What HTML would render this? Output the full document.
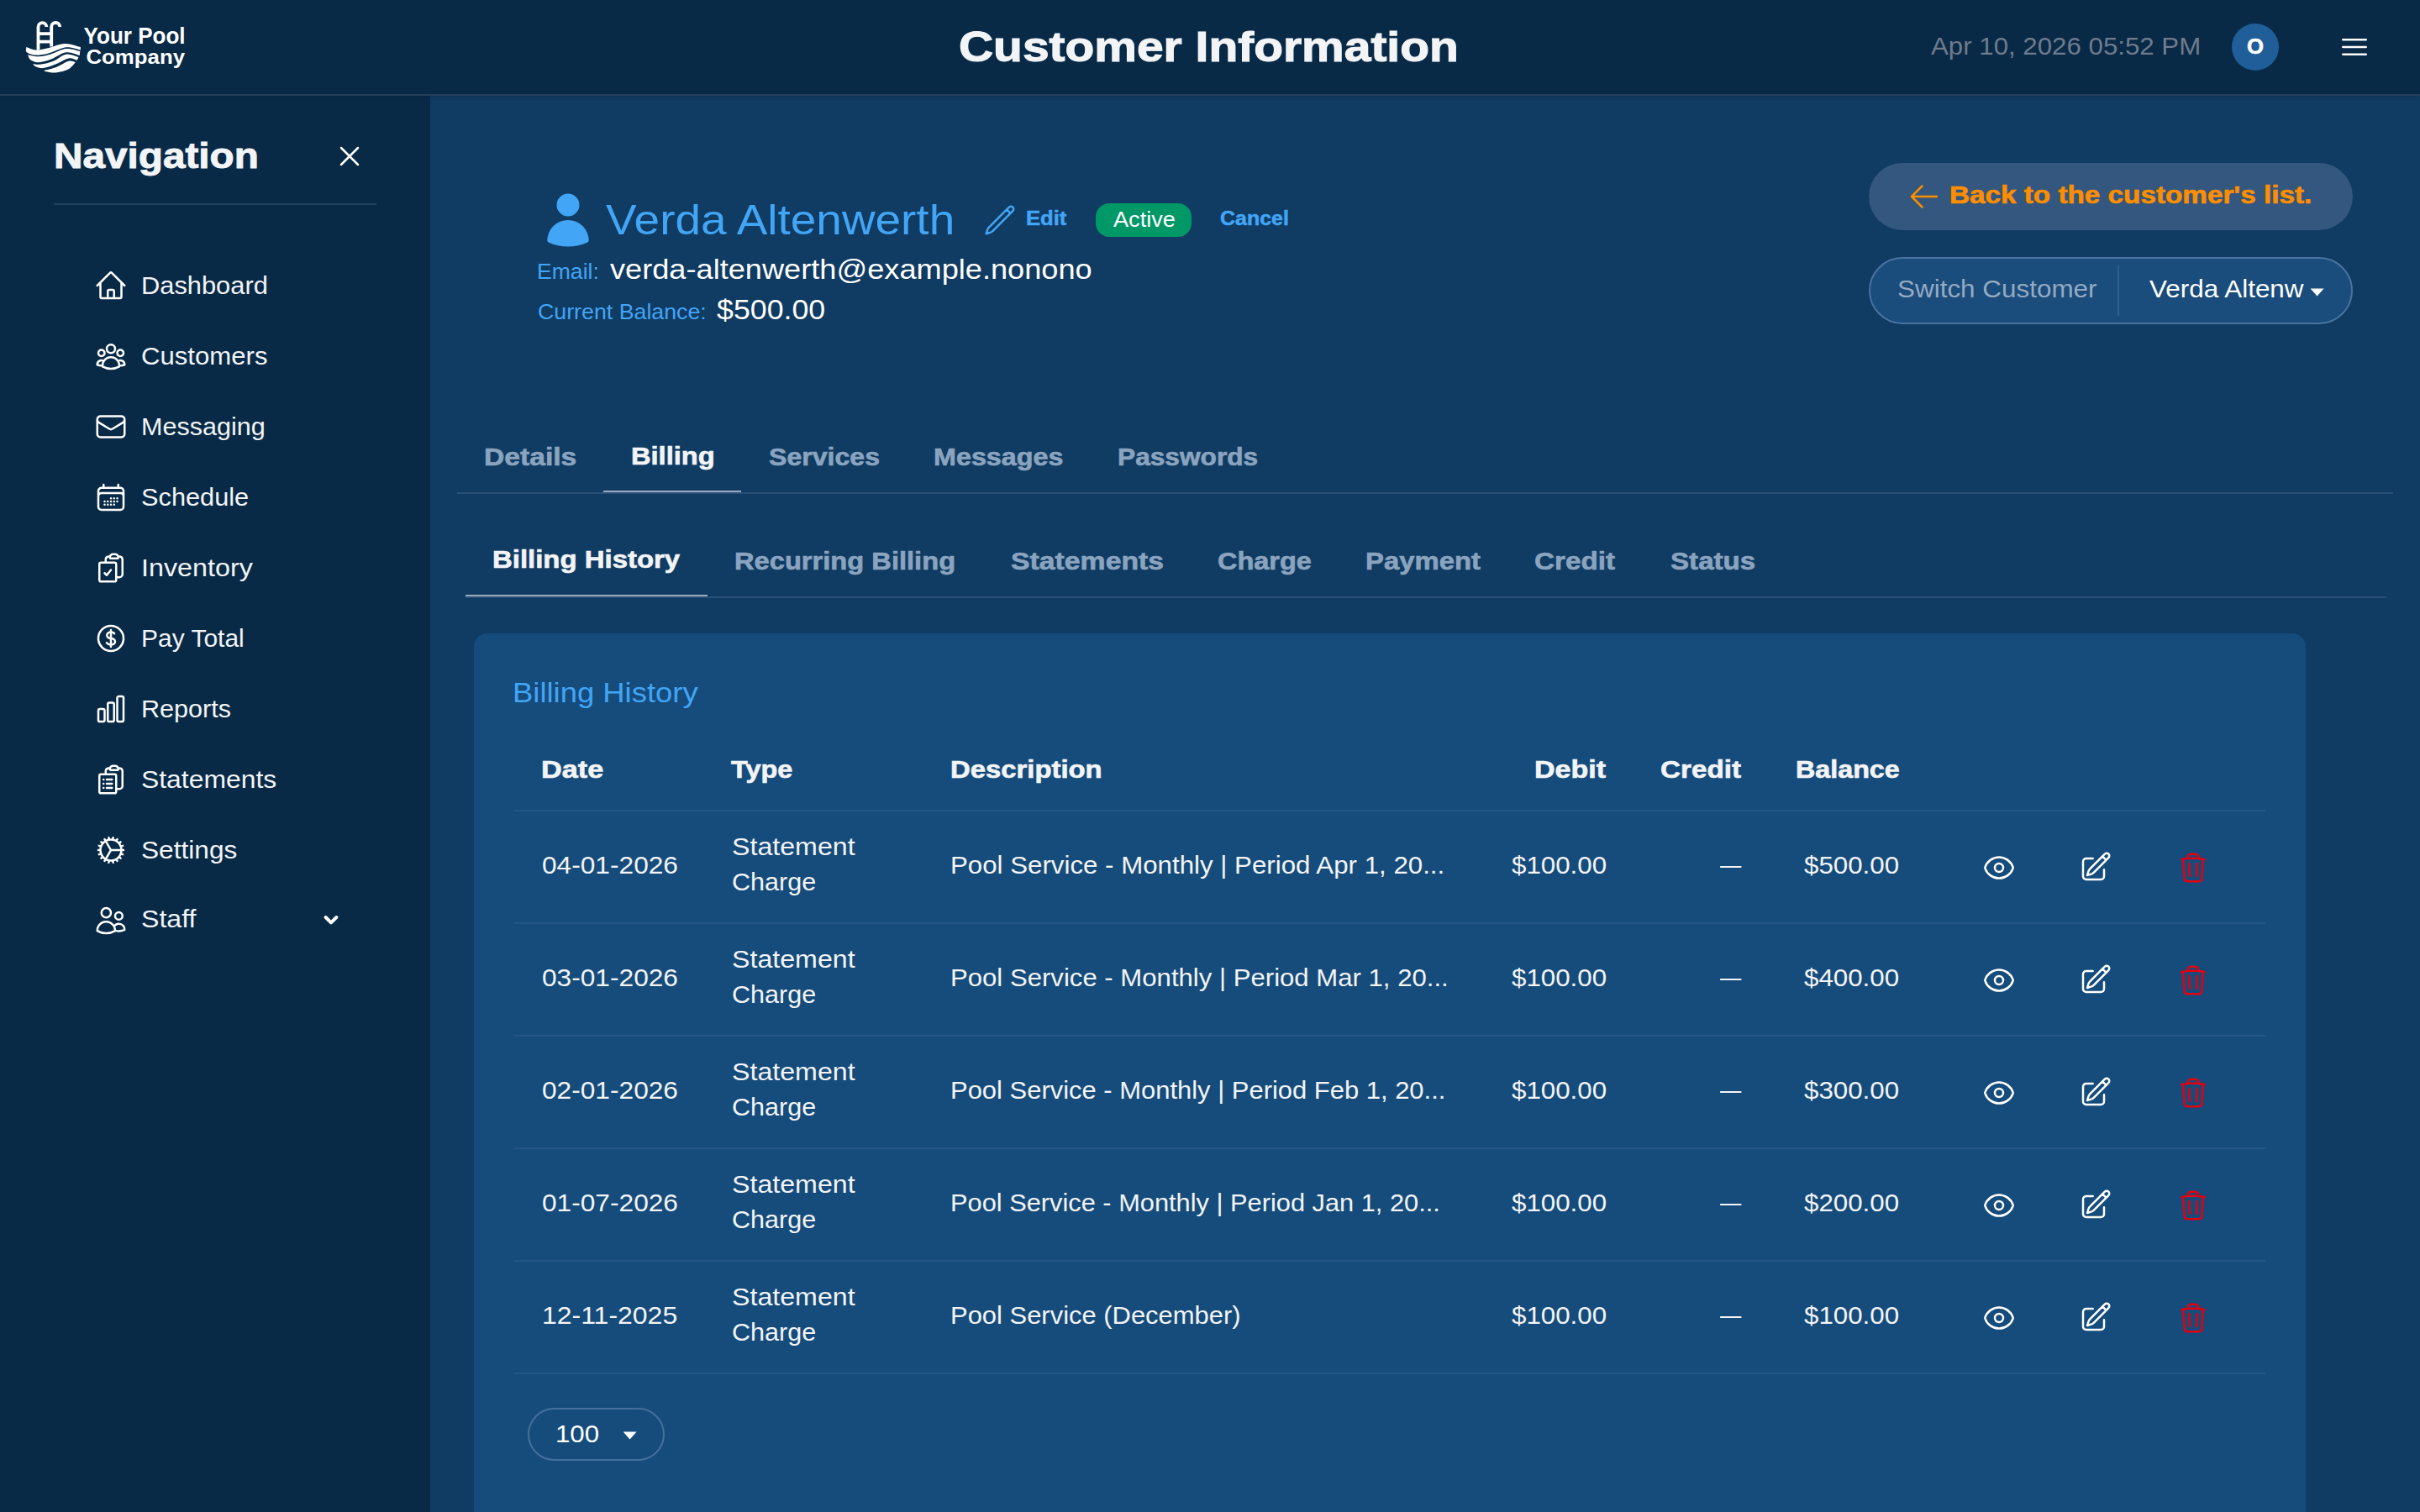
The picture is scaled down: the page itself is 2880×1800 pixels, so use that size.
<!DOCTYPE html>
<html><head><meta charset="utf-8"><title>Customer Information</title>
<style>
html,body{margin:0;padding:0;}
body{width:1440px;height:900px;overflow:hidden;position:relative;background:#103b62;font-family:"Liberation Sans",sans-serif;}
.t{position:absolute;white-space:nowrap;transform-origin:0 0;}
@media (min-width: 2000px) { body{zoom:2;} .k0{margin-top:-0.50px}.k1{margin-top:-0.50px}.k2{margin-top:-0.50px}.k3{margin-top:-1.50px}.k4{margin-top:-1.50px}.k5{margin-top:-1.00px}.k6{margin-top:-0.50px}.k7{margin-top:-1.00px}.k8{margin-top:-1.00px} }
svg{display:block}
</style></head><body>
<div style="position:absolute;left:0px;top:57px;width:256px;height:843px;background:#082a47;"></div>
<div style="position:absolute;left:0px;top:0px;width:1440px;height:56px;background:#082a47;box-shadow:0 1px 3px rgba(0,0,0,0.18)"></div>
<div style="position:absolute;left:0px;top:56px;width:1440px;height:1px;background:#243f5a;"></div>
<svg style="position:absolute;left:0;top:0" width="120" height="50" viewBox="0 0 240 100">
<g fill="none" stroke="#fff" stroke-width="3.8">
<path d="M45.5,59.5 V32 A4.95,4.95 0 0 1 55.4,32"/>
<path d="M61.2,55.5 V32 A5,5 0 0 1 71.2,32"/>
<path d="M47,40.1 H60 M47,49.7 H60"/>
</g>
<g fill="#fff">
<path d="M31.3,56 C33.23,56.60 38.48,59.45 42.90,59.60 C47.32,59.75 52.10,58.18 57.80,56.90 C63.50,55.62 70.75,52.05 77.10,51.90 C83.45,51.75 92.77,55.32 95.90,56.00 L95.9,59.6 C93.02,59.05 84.95,55.65 78.60,56.30 C72.25,56.95 63.75,61.95 57.80,63.50 C51.85,65.05 47.22,65.80 42.90,65.60 C38.58,65.40 33.83,63.90 31.90,62.30 C29.97,60.70 31.40,57.05 31.30,56.00 Z"/>
<path d="M33.1,65.3 C35.23,65.63 41.30,67.45 45.90,67.30 C50.50,67.15 55.25,65.93 60.70,64.40 C66.15,62.87 72.83,58.65 78.60,58.10 C84.37,57.55 92.52,60.60 95.30,61.10 L94.7,65.9 C92.02,65.30 84.27,61.52 78.60,62.30 C72.93,63.08 66.15,68.62 60.70,70.60 C55.25,72.58 49.97,74.10 45.90,74.20 C41.83,74.30 38.43,72.68 36.30,71.20 C34.17,69.72 33.63,66.28 33.10,65.30 Z"/>
<path d="M39,76.3 C40.63,76.35 44.68,77.20 48.80,76.60 C52.92,76.00 58.73,74.68 63.70,72.70 C68.67,70.72 73.63,65.45 78.60,64.70 C83.57,63.95 91.02,67.62 93.50,68.20 L91.7,71.8 C90.02,71.40 85.77,68.65 81.60,69.40 C77.43,70.15 71.67,74.37 66.70,76.30 C61.73,78.23 55.77,80.47 51.80,81.00 C47.83,81.53 45.03,80.28 42.90,79.50 C40.77,78.72 39.65,76.83 39.00,76.30 Z"/>
<path d="M52.4,84 C54.78,83.35 61.83,81.98 66.70,80.10 C71.57,78.22 77.73,73.73 81.60,72.70 C85.47,71.67 88.52,73.70 89.90,73.90 L89.9,73.9 C88.52,75.28 85.47,80.12 81.60,82.20 C77.73,84.28 71.17,85.90 66.70,86.40 C62.23,86.90 57.18,85.60 54.80,85.20 C52.42,84.80 52.80,84.20 52.40,84.00 Z"/>
</g>
<text x="99.6" y="52.2" font-family="Liberation Sans" font-weight="700" font-size="28" fill="#fff" textLength="121" lengthAdjust="spacingAndGlyphs">Your Pool</text>
<text x="102.5" y="76.4" font-family="Liberation Sans" font-weight="700" font-size="24.5" fill="#fff" textLength="117.5" lengthAdjust="spacingAndGlyphs">Company</text>
</svg>
<div class="t k8" style="left:570.74px;top:16.25px;font-size:25.32px;line-height:25.32px;font-weight:700;transform:scaleX(1.1248);color:#f3f4f6;-webkit-text-stroke:0.56px #f3f4f6;">Customer Information</div>
<div class="t k3" style="left:1149.00px;top:21.30px;font-size:14.77px;line-height:14.77px;font-weight:400;transform:scaleX(1.0575);color:#6f7b8c;">Apr 10, 2026 05:52 PM</div>
<div style="position:absolute;left:1328px;top:14px;width:28px;height:28px;border-radius:50%;background:#1f5e99"></div>
<div class="t k2" style="left:1336.84px;top:22.10px;font-size:12.66px;line-height:12.66px;font-weight:700;transform:scaleX(1.0156);color:#fff;-webkit-text-stroke:0.28px #fff;">O</div>
<svg style="position:absolute;left:1391px;top:18px;" width="20" height="20" viewBox="0 0 24 24" fill="none" stroke="#fff" stroke-width="1.5" stroke-linecap="round" stroke-linejoin="round"><path d="M3.75 6.75h16.5M3.75 12h16.5m-16.5 5.25h16.5"/></svg>
<div class="t k6" style="left:32.18px;top:83.00px;font-size:21.1px;line-height:21.1px;font-weight:700;transform:scaleX(1.1306);color:#f3f4f6;-webkit-text-stroke:0.46px #f3f4f6;">Navigation</div>
<svg style="position:absolute;left:198px;top:83px;" width="20" height="20" viewBox="0 0 24 24" fill="none" stroke="#fff" stroke-width="1.5" stroke-linecap="round" stroke-linejoin="round"><path d="M6 18 18 6M6 6l12 12"/></svg>
<div style="position:absolute;left:32px;top:121px;width:192px;height:1px;background:#22405f;"></div>
<div class="t k3" style="left:84.13px;top:164.00px;font-size:14.77px;line-height:14.77px;font-weight:400;transform:scaleX(1.0437);color:#f3f4f6;">Dashboard</div>
<svg style="position:absolute;left:56px;top:159.9px;" width="20" height="20" viewBox="0 0 24 24" fill="none" stroke="#fff" stroke-width="1.5" stroke-linecap="round" stroke-linejoin="round"><path d="m2.25 12 8.954-8.955c.44-.439 1.152-.439 1.591 0L21.75 12M4.5 9.75v10.125c0 .621.504 1.125 1.125 1.125H9.75v-4.875c0-.621.504-1.125 1.125-1.125h2.25c.621 0 1.125.504 1.125 1.125V21h4.125c.621 0 1.125-.504 1.125-1.125V9.75M8.25 21h8.25"/></svg>
<div class="t k3" style="left:83.99px;top:206.00px;font-size:14.77px;line-height:14.77px;font-weight:400;transform:scaleX(1.0539);color:#f3f4f6;">Customers</div>
<svg style="position:absolute;left:56px;top:201.9px;" width="20" height="20" viewBox="0 0 24 24" fill="none" stroke="#fff" stroke-width="1.5" stroke-linecap="round" stroke-linejoin="round"><path d="M18 18.72a9.094 9.094 0 0 0 3.741-.479 3 3 0 0 0-4.682-2.72m.94 3.198.001.031c0 .225-.012.447-.037.666A11.944 11.944 0 0 1 12 21c-2.17 0-4.207-.576-5.963-1.584A6.062 6.062 0 0 1 6 18.719m12 0a5.971 5.971 0 0 0-.941-3.197m0 0A5.995 5.995 0 0 0 12 12.75a5.995 5.995 0 0 0-5.058 2.772m0 0a3 3 0 0 0-4.681 2.72 8.986 8.986 0 0 0 3.74.477m.94-3.197a5.971 5.971 0 0 0-.94 3.197M15 6.75a3 3 0 1 1-6 0 3 3 0 0 1 6 0Zm6 3a2.25 2.25 0 1 1-4.5 0 2.25 2.25 0 0 1 4.5 0Zm-13.5 0a2.25 2.25 0 1 1-4.5 0 2.25 2.25 0 0 1 4.5 0Z"/></svg>
<div class="t k3" style="left:84.14px;top:248.00px;font-size:14.77px;line-height:14.77px;font-weight:400;transform:scaleX(1.0348);color:#f3f4f6;">Messaging</div>
<svg style="position:absolute;left:56px;top:243.9px;" width="20" height="20" viewBox="0 0 24 24" fill="none" stroke="#fff" stroke-width="1.5" stroke-linecap="round" stroke-linejoin="round"><path d="M21.75 6.75v10.5a2.25 2.25 0 0 1-2.25 2.25h-15a2.25 2.25 0 0 1-2.25-2.25V6.75m19.5 0A2.25 2.25 0 0 0 19.5 4.5h-15a2.25 2.25 0 0 0-2.25 2.25m19.5 0v.243a2.25 2.25 0 0 1-1.07 1.916l-7.5 4.615a2.25 2.25 0 0 1-2.36 0L3.32 8.91a2.25 2.25 0 0 1-1.07-1.916V6.75"/></svg>
<div class="t k3" style="left:84.14px;top:290.00px;font-size:14.77px;line-height:14.77px;font-weight:400;transform:scaleX(1.0410);color:#f3f4f6;">Schedule</div>
<svg style="position:absolute;left:56px;top:285.9px;" width="20" height="20" viewBox="0 0 24 24" fill="none" stroke="#fff" stroke-width="1.5" stroke-linecap="round" stroke-linejoin="round"><path d="M6.75 3v2.25M17.25 3v2.25M3 18.75V7.5a2.25 2.25 0 0 1 2.25-2.25h13.5A2.25 2.25 0 0 1 21 7.5v11.25m-18 0A2.25 2.25 0 0 0 5.25 21h13.5A2.25 2.25 0 0 0 21 18.75m-18 0v-7.5A2.25 2.25 0 0 1 5.25 9h13.5A2.25 2.25 0 0 1 21 11.25v7.5m-9-6h.008v.008H12v-.008ZM12 15h.008v.008H12V15Zm0 2.25h.008v.008H12v-.008ZM9.75 15h.008v.008H9.75V15Zm0 2.25h.008v.008H9.75v-.008ZM7.5 15h.008v.008H7.5V15Zm0 2.25h.008v.008H7.5v-.008Zm6.75-4.5h.008v.008h-.008v-.008Zm0 2.25h.008v.008h-.008V15Zm0 2.25h.008v.008h-.008v-.008Zm2.25-4.5h.008v.008H16.5v-.008Zm0 2.25h.008v.008H16.5V15Z"/></svg>
<div class="t k3" style="left:83.91px;top:332.00px;font-size:14.77px;line-height:14.77px;font-weight:400;transform:scaleX(1.0941);color:#f3f4f6;">Inventory</div>
<svg style="position:absolute;left:56px;top:327.9px;" width="20" height="20" viewBox="0 0 24 24" fill="none" stroke="#fff" stroke-width="1.5" stroke-linecap="round" stroke-linejoin="round"><path d="M11.35 3.836c-.065.21-.1.433-.1.664 0 .414.336.75.75.75h4.5a.75.75 0 0 0 .75-.75 2.25 2.25 0 0 0-.1-.664m-5.8 0A2.251 2.251 0 0 1 13.5 2.25H15c1.012 0 1.867.668 2.15 1.586m-5.8 0c-.376.023-.75.05-1.124.08C9.095 4.01 8.25 4.973 8.25 6.108V8.25m8.9-4.414c.376.023.75.05 1.124.08 1.131.094 1.976 1.057 1.976 2.192V16.5A2.25 2.25 0 0 1 18 18.75h-2.25m-7.5-10.5H4.875c-.621 0-1.125.504-1.125 1.125v11.25c0 .621.504 1.125 1.125 1.125h9.75c.621 0 1.125-.504 1.125-1.125V18.75m-7.5-10.5h6.375c.621 0 1.125.504 1.125 1.125v9.375m-8.25-3 1.5 1.5 3-3.75"/></svg>
<div class="t k3" style="left:84.17px;top:374.00px;font-size:14.77px;line-height:14.77px;font-weight:400;transform:scaleX(1.0151);color:#f3f4f6;">Pay Total</div>
<svg style="position:absolute;left:56px;top:369.9px;" width="20" height="20" viewBox="0 0 24 24" fill="none" stroke="#fff" stroke-width="1.5" stroke-linecap="round" stroke-linejoin="round"><path d="M12 6v12m-3-2.818.879.659c1.171.879 3.07.879 4.242 0 1.172-.879 1.172-2.303 0-3.182C13.536 12.219 12.768 12 12 12c-.725 0-1.45-.22-2.003-.659-1.106-.879-1.106-2.303 0-3.182s2.9-.879 4.006 0l.415.33M21 12a9 9 0 1 1-18 0 9 9 0 0 1 18 0Z"/></svg>
<div class="t k3" style="left:84.14px;top:416.00px;font-size:14.77px;line-height:14.77px;font-weight:400;transform:scaleX(1.0348);color:#f3f4f6;">Reports</div>
<svg style="position:absolute;left:56px;top:411.9px;" width="20" height="20" viewBox="0 0 24 24" fill="none" stroke="#fff" stroke-width="1.5" stroke-linecap="round" stroke-linejoin="round"><path d="M3 13.125C3 12.504 3.504 12 4.125 12h2.25c.621 0 1.125.504 1.125 1.125v6.75C7.5 20.496 6.996 21 6.375 21h-2.25A1.125 1.125 0 0 1 3 19.875v-6.75ZM9.75 8.625c0-.621.504-1.125 1.125-1.125h2.25c.621 0 1.125.504 1.125 1.125v11.25c0 .621-.504 1.125-1.125 1.125h-2.25a1.125 1.125 0 0 1-1.125-1.125V8.625ZM16.5 4.125c0-.621.504-1.125 1.125-1.125h2.25C20.496 3 21 3.504 21 4.125v15.75c0 .621-.504 1.125-1.125 1.125h-2.25a1.125 1.125 0 0 1-1.125-1.125V4.125Z"/></svg>
<div class="t k3" style="left:84.11px;top:458.00px;font-size:14.77px;line-height:14.77px;font-weight:400;transform:scaleX(1.0795);color:#f3f4f6;">Statements</div>
<svg style="position:absolute;left:56px;top:453.9px;" width="20" height="20" viewBox="0 0 24 24" fill="none" stroke="#fff" stroke-width="1.5" stroke-linecap="round" stroke-linejoin="round"><path d="M9 12h3.75M9 15h3.75M9 18h3.75m3 .75H18a2.25 2.25 0 0 0 2.25-2.25V6.108c0-1.135-.845-2.098-1.976-2.192a48.424 48.424 0 0 0-1.123-.08m-5.801 0c-.065.21-.1.433-.1.664 0 .414.336.75.75.75h4.5a.75.75 0 0 0 .75-.75 2.25 2.25 0 0 0-.1-.664m-5.8 0A2.251 2.251 0 0 1 13.5 2.25H15c1.012 0 1.867.668 2.15 1.586m-5.8 0c-.376.023-.75.05-1.124.08C9.095 4.01 8.25 4.973 8.25 6.108V8.25m0 0H4.875c-.621 0-1.125.504-1.125 1.125v11.25c0 .621.504 1.125 1.125 1.125h9.75c.621 0 1.125-.504 1.125-1.125V9.375c0-.621-.504-1.125-1.125-1.125H8.25ZM6.75 12h.008v.008H6.75V12Zm0 3h.008v.008H6.75V15Zm0 3h.008v.008H6.75V18Z"/></svg>
<div class="t k3" style="left:84.12px;top:500.00px;font-size:14.77px;line-height:14.77px;font-weight:400;transform:scaleX(1.0717);color:#f3f4f6;">Settings</div>
<svg style="position:absolute;left:56px;top:495.9px;" width="20" height="20" viewBox="0 0 24 24" fill="none" stroke="#fff" stroke-width="1.5" stroke-linecap="round" stroke-linejoin="round"><path d="M4.5 12a7.5 7.5 0 0 0 15 0m-15 0a7.5 7.5 0 1 1 15 0m-15 0H3m16.5 0H21m-1.5 0H12m-8.457 3.077 1.41-.513m14.095-5.13 1.41-.513M5.106 17.785l1.15-.964m11.49-9.642 1.149-.964M7.501 19.795l.75-1.3m7.5-12.99.75-1.3m-6.063 16.658.26-1.477m2.605-14.772.26-1.477m0 17.726-.26-1.477M10.698 4.614l-.26-1.477M16.5 19.794l-.75-1.299M7.5 4.205 12 12m6.894 5.785-1.149-.964M6.256 7.178l-1.15-.964m15.352 8.864-1.41-.513M4.954 9.435l-1.41-.514M12.002 12l-3.75 6.495"/></svg>
<div class="t k3" style="left:84.11px;top:540.88px;font-size:14.77px;line-height:14.77px;font-weight:400;transform:scaleX(1.0860);color:#f3f4f6;">Staff</div>
<svg style="position:absolute;left:56px;top:537.9px;" width="20" height="20" viewBox="0 0 24 24" fill="none" stroke="#fff" stroke-width="1.5" stroke-linecap="round" stroke-linejoin="round"><path d="M15 19.128a9.38 9.38 0 0 0 2.625.372 9.337 9.337 0 0 0 4.121-.952 4.125 4.125 0 0 0-7.533-2.493M15 19.128v-.003c0-1.113-.285-2.16-.786-3.07M15 19.128v.106A12.318 12.318 0 0 1 8.624 21c-2.331 0-4.512-.645-6.374-1.766l-.001-.109a6.375 6.375 0 0 1 11.964-3.07M12 6.375a3.375 3.375 0 1 1-6.75 0 3.375 3.375 0 0 1 6.75 0Zm8.25 2.25a2.625 2.625 0 1 1-5.25 0 2.625 2.625 0 0 1 5.25 0Z"/></svg>
<svg style="position:absolute;left:192px;top:544px" width="10" height="8" viewBox="0 0 10 8"><path d="M1.8 2 L5 5.2 L8.2 2" fill="none" stroke="#fff" stroke-width="2" stroke-linecap="round" stroke-linejoin="round"/></svg>
<svg style="position:absolute;left:320px;top:113px;" width="36" height="36" viewBox="0 0 24 24"><path fill="#42a5f5" fill-rule="evenodd" d="M7.5 6a4.5 4.5 0 1 1 9 0 4.5 4.5 0 0 1-9 0ZM3.751 20.105a8.25 8.25 0 0 1 16.498 0 .75.75 0 0 1-.437.695A18.683 18.683 0 0 1 12 22.5c-2.786 0-5.433-.608-7.812-1.7a.75.75 0 0 1-.437-.695Z"/></svg>
<div class="t k7" style="left:360.35px;top:119.38px;font-size:25.32px;line-height:25.32px;font-weight:400;transform:scaleX(1.0847);color:#42a5f5;">Verda Altenwerth</div>
<svg style="position:absolute;left:585px;top:121px;" width="20" height="20" viewBox="0 0 24 24" fill="none" stroke="#42a5f5" stroke-width="1.5" stroke-linecap="round" stroke-linejoin="round"><path d="m16.862 4.487 1.687-1.688a1.875 1.875 0 1 1 2.652 2.652L6.832 19.82a4.5 4.5 0 0 1-1.897 1.13l-2.685.8.8-2.685a4.5 4.5 0 0 1 1.13-1.897L16.863 4.487Zm0 0L19.5 7.125"/></svg>
<div class="t k0" style="left:610.50px;top:124.95px;font-size:11.6px;line-height:11.6px;font-weight:700;transform:scaleX(1.1050);color:#42a5f5;-webkit-text-stroke:0.26px #42a5f5;">Edit</div>
<div style="position:absolute;left:652px;top:121px;width:57px;height:20px;border-radius:8px;background:#009866"></div>
<div class="t k1" style="left:662.25px;top:124.80px;font-size:12.66px;line-height:12.66px;font-weight:400;transform:scaleX(1.0717);color:#fff;">Active</div>
<div class="t k0" style="left:726.20px;top:124.95px;font-size:11.6px;line-height:11.6px;font-weight:700;transform:scaleX(1.0764);color:#42a5f5;-webkit-text-stroke:0.26px #42a5f5;">Cancel</div>
<div class="t k1" style="left:319.56px;top:155.88px;font-size:12.66px;line-height:12.66px;font-weight:400;transform:scaleX(1.0496);color:#42a5f5;">Email:</div>
<div class="t k5" style="left:363.12px;top:152.88px;font-size:16.88px;line-height:16.88px;font-weight:400;transform:scaleX(1.0719);color:#fff;">verda-altenwerth@example.nonono</div>
<div class="t k1" style="left:319.96px;top:179.75px;font-size:12.66px;line-height:12.66px;font-weight:400;transform:scaleX(1.0572);color:#42a5f5;">Current Balance:</div>
<div class="t k5" style="left:426.32px;top:176.75px;font-size:16.88px;line-height:16.88px;font-weight:400;transform:scaleX(1.0594);color:#fff;">$500.00</div>
<div style="position:absolute;left:1112px;top:97px;width:288px;height:40px;border-radius:20px;background:#33577e"></div>
<svg style="position:absolute;left:1135px;top:107px;" width="20" height="20" viewBox="0 0 24 24" fill="none" stroke="#fd8e00" stroke-width="1.5" stroke-linecap="round" stroke-linejoin="round"><path d="M10.5 19.5 3 12m0 0 7.5-7.5M3 12h18"/></svg>
<div class="t k4" style="left:1160.09px;top:109.88px;font-size:14.77px;line-height:14.77px;font-weight:700;transform:scaleX(1.1267);color:#fd8e00;-webkit-text-stroke:0.32px #fd8e00;">Back to the customer's list.</div>
<div style="position:absolute;left:1112px;top:153px;width:288px;height:40px;box-sizing:border-box;border-radius:20px;background:#1a4c7c;border:1px solid #4a73a0"></div>
<div style="position:absolute;left:1260px;top:158px;width:1px;height:30px;background:#2f5f8f;"></div>
<div class="t k3" style="left:1128.84px;top:166.12px;font-size:14.77px;line-height:14.77px;font-weight:400;transform:scaleX(1.0643);color:#94aac2;">Switch Customer</div>
<div class="t k3" style="left:1278.84px;top:166.12px;font-size:14.77px;line-height:14.77px;font-weight:400;transform:scaleX(1.0649);color:#fff;">Verda Altenw</div>
<svg style="position:absolute;left:1374px;top:171px" width="10" height="6" viewBox="0 0 10 6"><path d="M0.8 0.8 H8.8 L4.8 5.2 Z" fill="#fff"/></svg>
<div style="position:absolute;left:272px;top:293px;width:1152px;height:1px;background:#2a5075;"></div>
<div class="t k4" style="left:288.12px;top:265.88px;font-size:14.77px;line-height:14.77px;font-weight:700;transform:scaleX(1.1392);color:#8aa4bf;-webkit-text-stroke:0.32px #8aa4bf;">Details</div>
<div class="t k4" style="left:375.34px;top:265.25px;font-size:14.77px;line-height:14.77px;font-weight:700;transform:scaleX(1.1042);color:#f3f4f6;-webkit-text-stroke:0.32px #f3f4f6;">Billing</div>
<div style="position:absolute;left:359.187109375px;top:292px;width:81.8546875px;height:1px;background:#9aabbd;"></div>
<div class="t k4" style="left:457.58px;top:265.88px;font-size:14.77px;line-height:14.77px;font-weight:700;transform:scaleX(1.0860);color:#8aa4bf;-webkit-text-stroke:0.32px #8aa4bf;">Services</div>
<div class="t k4" style="left:555.74px;top:265.88px;font-size:14.77px;line-height:14.77px;font-weight:700;transform:scaleX(1.0940);color:#8aa4bf;-webkit-text-stroke:0.32px #8aa4bf;">Messages</div>
<div class="t k4" style="left:665.15px;top:265.88px;font-size:14.77px;line-height:14.77px;font-weight:700;transform:scaleX(1.0725);color:#8aa4bf;-webkit-text-stroke:0.32px #8aa4bf;">Passwords</div>
<div style="position:absolute;left:277px;top:355px;width:1143px;height:1px;background:#2a5075;"></div>
<div class="t k4" style="left:293.14px;top:327.12px;font-size:14.77px;line-height:14.77px;font-weight:700;transform:scaleX(1.1148);color:#f3f4f6;-webkit-text-stroke:0.32px #f3f4f6;">Billing History</div>
<div style="position:absolute;left:277px;top:354px;width:143.919140625px;height:1px;background:#9aabbd;"></div>
<div class="t k4" style="left:437.07px;top:328.00px;font-size:14.77px;line-height:14.77px;font-weight:700;transform:scaleX(1.1058);color:#8aa4bf;-webkit-text-stroke:0.32px #8aa4bf;">Recurring Billing</div>
<div class="t k4" style="left:601.29px;top:328.00px;font-size:14.77px;line-height:14.77px;font-weight:700;transform:scaleX(1.1439);color:#8aa4bf;-webkit-text-stroke:0.32px #8aa4bf;">Statements</div>
<div class="t k4" style="left:724.32px;top:328.00px;font-size:14.77px;line-height:14.77px;font-weight:700;transform:scaleX(1.0998);color:#8aa4bf;-webkit-text-stroke:0.32px #8aa4bf;">Charge</div>
<div class="t k4" style="left:812.53px;top:328.00px;font-size:14.77px;line-height:14.77px;font-weight:700;transform:scaleX(1.1124);color:#8aa4bf;-webkit-text-stroke:0.32px #8aa4bf;">Payment</div>
<div class="t k4" style="left:913.19px;top:328.00px;font-size:14.77px;line-height:14.77px;font-weight:700;transform:scaleX(1.1248);color:#8aa4bf;-webkit-text-stroke:0.32px #8aa4bf;">Credit</div>
<div class="t k4" style="left:993.86px;top:328.00px;font-size:14.77px;line-height:14.77px;font-weight:700;transform:scaleX(1.1222);color:#8aa4bf;-webkit-text-stroke:0.32px #8aa4bf;">Status</div>
<div style="position:absolute;left:282px;top:377px;width:1090px;height:540px;border-radius:8px;background:#164c7c"></div>
<div class="t k5" style="left:305.04px;top:405.12px;font-size:16.88px;line-height:16.88px;font-weight:400;transform:scaleX(1.0794);color:#42a5f5;">Billing History</div>
<div class="t k4" style="left:322.10px;top:452.12px;font-size:14.77px;line-height:14.77px;font-weight:700;transform:scaleX(1.1595);color:#f3f4f6;-webkit-text-stroke:0.32px #f3f4f6;">Date</div>
<div class="t k4" style="left:435.21px;top:452.12px;font-size:14.77px;line-height:14.77px;font-weight:700;transform:scaleX(1.0980);color:#f3f4f6;-webkit-text-stroke:0.32px #f3f4f6;">Type</div>
<div class="t k4" style="left:565.55px;top:452.12px;font-size:14.77px;line-height:14.77px;font-weight:700;transform:scaleX(1.1120);color:#f3f4f6;-webkit-text-stroke:0.32px #f3f4f6;">Description</div>
<div class="t k4" style="left:913.00px;top:452.12px;font-size:14.77px;line-height:14.77px;font-weight:700;transform:scaleX(1.1515);color:#f3f4f6;-webkit-text-stroke:0.32px #f3f4f6;">Debit</div>
<div class="t k4" style="left:988.01px;top:452.12px;font-size:14.77px;line-height:14.77px;font-weight:700;transform:scaleX(1.1248);color:#f3f4f6;-webkit-text-stroke:0.32px #f3f4f6;">Credit</div>
<div class="t k4" style="left:1068.42px;top:452.12px;font-size:14.77px;line-height:14.77px;font-weight:700;transform:scaleX(1.0927);color:#f3f4f6;-webkit-text-stroke:0.32px #f3f4f6;">Balance</div>
<div style="position:absolute;left:306px;top:482px;width:1042px;height:1px;background:#245589;"></div>
<div class="t k3" style="left:322.28px;top:509.00px;font-size:14.77px;line-height:14.77px;font-weight:400;transform:scaleX(1.0722);color:#f3f4f6;">04-01-2026</div>
<div class="t k3" style="left:435.41px;top:498.00px;font-size:14.77px;line-height:14.77px;font-weight:400;transform:scaleX(1.0890);color:#f3f4f6;">Statement</div>
<div class="t k3" style="left:435.31px;top:519.00px;font-size:14.77px;line-height:14.77px;font-weight:400;transform:scaleX(1.0343);color:#f3f4f6;">Charge</div>
<div class="t k3" style="left:565.51px;top:509.00px;font-size:14.77px;line-height:14.77px;font-weight:400;transform:scaleX(1.0581);color:#f3f4f6;">Pool Service - Monthly | Period Apr 1, 20...</div>
<div class="t k3" style="left:899.33px;top:509.00px;font-size:14.77px;line-height:14.77px;font-weight:400;transform:scaleX(1.0594);color:#f3f4f6;">$100.00</div>
<div class="t k3" style="left:1023.25px;top:509.00px;font-size:14.77px;line-height:14.77px;font-weight:400;transform:scaleX(0.8531);color:#f3f4f6;">—</div>
<div class="t k3" style="left:1073.73px;top:509.00px;font-size:14.77px;line-height:14.77px;font-weight:400;transform:scaleX(1.0594);color:#f3f4f6;">$500.00</div>
<svg style="position:absolute;left:1179.25px;top:506.25px;" width="20" height="20" viewBox="0 0 24 24" fill="none" stroke="#fff" stroke-width="1.5" stroke-linecap="round" stroke-linejoin="round"><path d="M2.036 12.322a1.012 1.012 0 0 1 0-.639C3.423 7.51 7.36 4.5 12 4.5c4.638 0 8.573 3.007 9.963 7.178.07.207.07.431 0 .639C20.577 16.49 16.64 19.5 12 19.5c-4.638 0-8.573-3.007-9.963-7.178Z"/><path d="M15 12a3 3 0 1 1-6 0 3 3 0 0 1 6 0Z"/></svg>
<svg style="position:absolute;left:1237px;top:505.75px;" width="20" height="20" viewBox="0 0 24 24" fill="none" stroke="#fff" stroke-width="1.5" stroke-linecap="round" stroke-linejoin="round"><path d="m16.862 4.487 1.687-1.688a1.875 1.875 0 1 1 2.652 2.652L10.582 16.07a4.5 4.5 0 0 1-1.897 1.13L6 18l.8-2.685a4.5 4.5 0 0 1 1.13-1.897l8.932-8.931Zm0 0L19.5 7.125M18 14v4.75A2.25 2.25 0 0 1 15.75 21H5.25A2.25 2.25 0 0 1 3 18.75V8.25A2.25 2.25 0 0 1 5.25 6H10"/></svg>
<svg style="position:absolute;left:1295px;top:506.25px;" width="20" height="20" viewBox="0 0 24 24" fill="none" stroke="#e3000f" stroke-width="1.5" stroke-linecap="round" stroke-linejoin="round"><path d="m14.74 9-.346 9m-4.788 0L9.26 9m9.968-3.21c.342.052.682.107 1.022.166m-1.022-.165L18.16 19.673a2.25 2.25 0 0 1-2.244 2.077H8.084a2.25 2.25 0 0 1-2.244-2.077L4.772 5.79m14.456 0a48.108 48.108 0 0 0-3.478-.397m-12 .562c.34-.059.68-.114 1.022-.165m0 0a48.11 48.11 0 0 1 3.478-.397m7.5 0v-.916c0-1.18-.91-2.164-2.09-2.201a51.964 51.964 0 0 0-3.32 0c-1.18.037-2.09 1.022-2.09 2.201v.916m7.5 0a48.667 48.667 0 0 0-7.5 0"/></svg>
<div style="position:absolute;left:306px;top:549px;width:1042px;height:1px;background:#245589;"></div>
<div class="t k3" style="left:322.28px;top:576.00px;font-size:14.77px;line-height:14.77px;font-weight:400;transform:scaleX(1.0722);color:#f3f4f6;">03-01-2026</div>
<div class="t k3" style="left:435.41px;top:565.00px;font-size:14.77px;line-height:14.77px;font-weight:400;transform:scaleX(1.0890);color:#f3f4f6;">Statement</div>
<div class="t k3" style="left:435.31px;top:586.00px;font-size:14.77px;line-height:14.77px;font-weight:400;transform:scaleX(1.0343);color:#f3f4f6;">Charge</div>
<div class="t k3" style="left:565.52px;top:576.00px;font-size:14.77px;line-height:14.77px;font-weight:400;transform:scaleX(1.0538);color:#f3f4f6;">Pool Service - Monthly | Period Mar 1, 20...</div>
<div class="t k3" style="left:899.33px;top:576.00px;font-size:14.77px;line-height:14.77px;font-weight:400;transform:scaleX(1.0594);color:#f3f4f6;">$100.00</div>
<div class="t k3" style="left:1023.25px;top:576.00px;font-size:14.77px;line-height:14.77px;font-weight:400;transform:scaleX(0.8531);color:#f3f4f6;">—</div>
<div class="t k3" style="left:1073.73px;top:576.00px;font-size:14.77px;line-height:14.77px;font-weight:400;transform:scaleX(1.0594);color:#f3f4f6;">$400.00</div>
<svg style="position:absolute;left:1179.25px;top:573.25px;" width="20" height="20" viewBox="0 0 24 24" fill="none" stroke="#fff" stroke-width="1.5" stroke-linecap="round" stroke-linejoin="round"><path d="M2.036 12.322a1.012 1.012 0 0 1 0-.639C3.423 7.51 7.36 4.5 12 4.5c4.638 0 8.573 3.007 9.963 7.178.07.207.07.431 0 .639C20.577 16.49 16.64 19.5 12 19.5c-4.638 0-8.573-3.007-9.963-7.178Z"/><path d="M15 12a3 3 0 1 1-6 0 3 3 0 0 1 6 0Z"/></svg>
<svg style="position:absolute;left:1237px;top:572.75px;" width="20" height="20" viewBox="0 0 24 24" fill="none" stroke="#fff" stroke-width="1.5" stroke-linecap="round" stroke-linejoin="round"><path d="m16.862 4.487 1.687-1.688a1.875 1.875 0 1 1 2.652 2.652L10.582 16.07a4.5 4.5 0 0 1-1.897 1.13L6 18l.8-2.685a4.5 4.5 0 0 1 1.13-1.897l8.932-8.931Zm0 0L19.5 7.125M18 14v4.75A2.25 2.25 0 0 1 15.75 21H5.25A2.25 2.25 0 0 1 3 18.75V8.25A2.25 2.25 0 0 1 5.25 6H10"/></svg>
<svg style="position:absolute;left:1295px;top:573.25px;" width="20" height="20" viewBox="0 0 24 24" fill="none" stroke="#e3000f" stroke-width="1.5" stroke-linecap="round" stroke-linejoin="round"><path d="m14.74 9-.346 9m-4.788 0L9.26 9m9.968-3.21c.342.052.682.107 1.022.166m-1.022-.165L18.16 19.673a2.25 2.25 0 0 1-2.244 2.077H8.084a2.25 2.25 0 0 1-2.244-2.077L4.772 5.79m14.456 0a48.108 48.108 0 0 0-3.478-.397m-12 .562c.34-.059.68-.114 1.022-.165m0 0a48.11 48.11 0 0 1 3.478-.397m7.5 0v-.916c0-1.18-.91-2.164-2.09-2.201a51.964 51.964 0 0 0-3.32 0c-1.18.037-2.09 1.022-2.09 2.201v.916m7.5 0a48.667 48.667 0 0 0-7.5 0"/></svg>
<div style="position:absolute;left:306px;top:616px;width:1042px;height:1px;background:#245589;"></div>
<div class="t k3" style="left:322.28px;top:643.00px;font-size:14.77px;line-height:14.77px;font-weight:400;transform:scaleX(1.0722);color:#f3f4f6;">02-01-2026</div>
<div class="t k3" style="left:435.41px;top:632.00px;font-size:14.77px;line-height:14.77px;font-weight:400;transform:scaleX(1.0890);color:#f3f4f6;">Statement</div>
<div class="t k3" style="left:435.31px;top:653.00px;font-size:14.77px;line-height:14.77px;font-weight:400;transform:scaleX(1.0343);color:#f3f4f6;">Charge</div>
<div class="t k3" style="left:565.53px;top:643.00px;font-size:14.77px;line-height:14.77px;font-weight:400;transform:scaleX(1.0478);color:#f3f4f6;">Pool Service - Monthly | Period Feb 1, 20...</div>
<div class="t k3" style="left:899.33px;top:643.00px;font-size:14.77px;line-height:14.77px;font-weight:400;transform:scaleX(1.0594);color:#f3f4f6;">$100.00</div>
<div class="t k3" style="left:1023.25px;top:643.00px;font-size:14.77px;line-height:14.77px;font-weight:400;transform:scaleX(0.8531);color:#f3f4f6;">—</div>
<div class="t k3" style="left:1073.73px;top:643.00px;font-size:14.77px;line-height:14.77px;font-weight:400;transform:scaleX(1.0594);color:#f3f4f6;">$300.00</div>
<svg style="position:absolute;left:1179.25px;top:640.25px;" width="20" height="20" viewBox="0 0 24 24" fill="none" stroke="#fff" stroke-width="1.5" stroke-linecap="round" stroke-linejoin="round"><path d="M2.036 12.322a1.012 1.012 0 0 1 0-.639C3.423 7.51 7.36 4.5 12 4.5c4.638 0 8.573 3.007 9.963 7.178.07.207.07.431 0 .639C20.577 16.49 16.64 19.5 12 19.5c-4.638 0-8.573-3.007-9.963-7.178Z"/><path d="M15 12a3 3 0 1 1-6 0 3 3 0 0 1 6 0Z"/></svg>
<svg style="position:absolute;left:1237px;top:639.75px;" width="20" height="20" viewBox="0 0 24 24" fill="none" stroke="#fff" stroke-width="1.5" stroke-linecap="round" stroke-linejoin="round"><path d="m16.862 4.487 1.687-1.688a1.875 1.875 0 1 1 2.652 2.652L10.582 16.07a4.5 4.5 0 0 1-1.897 1.13L6 18l.8-2.685a4.5 4.5 0 0 1 1.13-1.897l8.932-8.931Zm0 0L19.5 7.125M18 14v4.75A2.25 2.25 0 0 1 15.75 21H5.25A2.25 2.25 0 0 1 3 18.75V8.25A2.25 2.25 0 0 1 5.25 6H10"/></svg>
<svg style="position:absolute;left:1295px;top:640.25px;" width="20" height="20" viewBox="0 0 24 24" fill="none" stroke="#e3000f" stroke-width="1.5" stroke-linecap="round" stroke-linejoin="round"><path d="m14.74 9-.346 9m-4.788 0L9.26 9m9.968-3.21c.342.052.682.107 1.022.166m-1.022-.165L18.16 19.673a2.25 2.25 0 0 1-2.244 2.077H8.084a2.25 2.25 0 0 1-2.244-2.077L4.772 5.79m14.456 0a48.108 48.108 0 0 0-3.478-.397m-12 .562c.34-.059.68-.114 1.022-.165m0 0a48.11 48.11 0 0 1 3.478-.397m7.5 0v-.916c0-1.18-.91-2.164-2.09-2.201a51.964 51.964 0 0 0-3.32 0c-1.18.037-2.09 1.022-2.09 2.201v.916m7.5 0a48.667 48.667 0 0 0-7.5 0"/></svg>
<div style="position:absolute;left:306px;top:683px;width:1042px;height:1px;background:#245589;"></div>
<div class="t k3" style="left:322.28px;top:710.00px;font-size:14.77px;line-height:14.77px;font-weight:400;transform:scaleX(1.0722);color:#f3f4f6;">01-07-2026</div>
<div class="t k3" style="left:435.41px;top:699.00px;font-size:14.77px;line-height:14.77px;font-weight:400;transform:scaleX(1.0890);color:#f3f4f6;">Statement</div>
<div class="t k3" style="left:435.31px;top:720.00px;font-size:14.77px;line-height:14.77px;font-weight:400;transform:scaleX(1.0343);color:#f3f4f6;">Charge</div>
<div class="t k3" style="left:565.53px;top:710.00px;font-size:14.77px;line-height:14.77px;font-weight:400;transform:scaleX(1.0423);color:#f3f4f6;">Pool Service - Monthly | Period Jan 1, 20...</div>
<div class="t k3" style="left:899.33px;top:710.00px;font-size:14.77px;line-height:14.77px;font-weight:400;transform:scaleX(1.0594);color:#f3f4f6;">$100.00</div>
<div class="t k3" style="left:1023.25px;top:710.00px;font-size:14.77px;line-height:14.77px;font-weight:400;transform:scaleX(0.8531);color:#f3f4f6;">—</div>
<div class="t k3" style="left:1073.73px;top:710.00px;font-size:14.77px;line-height:14.77px;font-weight:400;transform:scaleX(1.0594);color:#f3f4f6;">$200.00</div>
<svg style="position:absolute;left:1179.25px;top:707.25px;" width="20" height="20" viewBox="0 0 24 24" fill="none" stroke="#fff" stroke-width="1.5" stroke-linecap="round" stroke-linejoin="round"><path d="M2.036 12.322a1.012 1.012 0 0 1 0-.639C3.423 7.51 7.36 4.5 12 4.5c4.638 0 8.573 3.007 9.963 7.178.07.207.07.431 0 .639C20.577 16.49 16.64 19.5 12 19.5c-4.638 0-8.573-3.007-9.963-7.178Z"/><path d="M15 12a3 3 0 1 1-6 0 3 3 0 0 1 6 0Z"/></svg>
<svg style="position:absolute;left:1237px;top:706.75px;" width="20" height="20" viewBox="0 0 24 24" fill="none" stroke="#fff" stroke-width="1.5" stroke-linecap="round" stroke-linejoin="round"><path d="m16.862 4.487 1.687-1.688a1.875 1.875 0 1 1 2.652 2.652L10.582 16.07a4.5 4.5 0 0 1-1.897 1.13L6 18l.8-2.685a4.5 4.5 0 0 1 1.13-1.897l8.932-8.931Zm0 0L19.5 7.125M18 14v4.75A2.25 2.25 0 0 1 15.75 21H5.25A2.25 2.25 0 0 1 3 18.75V8.25A2.25 2.25 0 0 1 5.25 6H10"/></svg>
<svg style="position:absolute;left:1295px;top:707.25px;" width="20" height="20" viewBox="0 0 24 24" fill="none" stroke="#e3000f" stroke-width="1.5" stroke-linecap="round" stroke-linejoin="round"><path d="m14.74 9-.346 9m-4.788 0L9.26 9m9.968-3.21c.342.052.682.107 1.022.166m-1.022-.165L18.16 19.673a2.25 2.25 0 0 1-2.244 2.077H8.084a2.25 2.25 0 0 1-2.244-2.077L4.772 5.79m14.456 0a48.108 48.108 0 0 0-3.478-.397m-12 .562c.34-.059.68-.114 1.022-.165m0 0a48.11 48.11 0 0 1 3.478-.397m7.5 0v-.916c0-1.18-.91-2.164-2.09-2.201a51.964 51.964 0 0 0-3.32 0c-1.18.037-2.09 1.022-2.09 2.201v.916m7.5 0a48.667 48.667 0 0 0-7.5 0"/></svg>
<div style="position:absolute;left:306px;top:750px;width:1042px;height:1px;background:#245589;"></div>
<div class="t k3" style="left:322.26px;top:777.00px;font-size:14.77px;line-height:14.77px;font-weight:400;transform:scaleX(1.0827);color:#f3f4f6;">12-11-2025</div>
<div class="t k3" style="left:435.41px;top:766.00px;font-size:14.77px;line-height:14.77px;font-weight:400;transform:scaleX(1.0890);color:#f3f4f6;">Statement</div>
<div class="t k3" style="left:435.31px;top:787.00px;font-size:14.77px;line-height:14.77px;font-weight:400;transform:scaleX(1.0343);color:#f3f4f6;">Charge</div>
<div class="t k3" style="left:565.53px;top:777.00px;font-size:14.77px;line-height:14.77px;font-weight:400;transform:scaleX(1.0476);color:#f3f4f6;">Pool Service (December)</div>
<div class="t k3" style="left:899.33px;top:777.00px;font-size:14.77px;line-height:14.77px;font-weight:400;transform:scaleX(1.0594);color:#f3f4f6;">$100.00</div>
<div class="t k3" style="left:1023.25px;top:777.00px;font-size:14.77px;line-height:14.77px;font-weight:400;transform:scaleX(0.8531);color:#f3f4f6;">—</div>
<div class="t k3" style="left:1073.73px;top:777.00px;font-size:14.77px;line-height:14.77px;font-weight:400;transform:scaleX(1.0594);color:#f3f4f6;">$100.00</div>
<svg style="position:absolute;left:1179.25px;top:774.25px;" width="20" height="20" viewBox="0 0 24 24" fill="none" stroke="#fff" stroke-width="1.5" stroke-linecap="round" stroke-linejoin="round"><path d="M2.036 12.322a1.012 1.012 0 0 1 0-.639C3.423 7.51 7.36 4.5 12 4.5c4.638 0 8.573 3.007 9.963 7.178.07.207.07.431 0 .639C20.577 16.49 16.64 19.5 12 19.5c-4.638 0-8.573-3.007-9.963-7.178Z"/><path d="M15 12a3 3 0 1 1-6 0 3 3 0 0 1 6 0Z"/></svg>
<svg style="position:absolute;left:1237px;top:773.75px;" width="20" height="20" viewBox="0 0 24 24" fill="none" stroke="#fff" stroke-width="1.5" stroke-linecap="round" stroke-linejoin="round"><path d="m16.862 4.487 1.687-1.688a1.875 1.875 0 1 1 2.652 2.652L10.582 16.07a4.5 4.5 0 0 1-1.897 1.13L6 18l.8-2.685a4.5 4.5 0 0 1 1.13-1.897l8.932-8.931Zm0 0L19.5 7.125M18 14v4.75A2.25 2.25 0 0 1 15.75 21H5.25A2.25 2.25 0 0 1 3 18.75V8.25A2.25 2.25 0 0 1 5.25 6H10"/></svg>
<svg style="position:absolute;left:1295px;top:774.25px;" width="20" height="20" viewBox="0 0 24 24" fill="none" stroke="#e3000f" stroke-width="1.5" stroke-linecap="round" stroke-linejoin="round"><path d="m14.74 9-.346 9m-4.788 0L9.26 9m9.968-3.21c.342.052.682.107 1.022.166m-1.022-.165L18.16 19.673a2.25 2.25 0 0 1-2.244 2.077H8.084a2.25 2.25 0 0 1-2.244-2.077L4.772 5.79m14.456 0a48.108 48.108 0 0 0-3.478-.397m-12 .562c.34-.059.68-.114 1.022-.165m0 0a48.11 48.11 0 0 1 3.478-.397m7.5 0v-.916c0-1.18-.91-2.164-2.09-2.201a51.964 51.964 0 0 0-3.32 0c-1.18.037-2.09 1.022-2.09 2.201v.916m7.5 0a48.667 48.667 0 0 0-7.5 0"/></svg>
<div style="position:absolute;left:306px;top:817px;width:1042px;height:1px;background:#245589;"></div>
<div style="position:absolute;left:314px;top:838px;width:81.5px;height:31.5px;box-sizing:border-box;border-radius:16px;border:1px solid #46709b"></div>
<div class="t k3" style="left:330.55px;top:847.40px;font-size:14.77px;line-height:14.77px;font-weight:400;transform:scaleX(1.0579);color:#fff;">100</div>
<svg style="position:absolute;left:370px;top:851.5px" width="10" height="6" viewBox="0 0 10 6"><path d="M0.8 0.8 H8.8 L4.8 5.2 Z" fill="#fff"/></svg>
</body></html>
